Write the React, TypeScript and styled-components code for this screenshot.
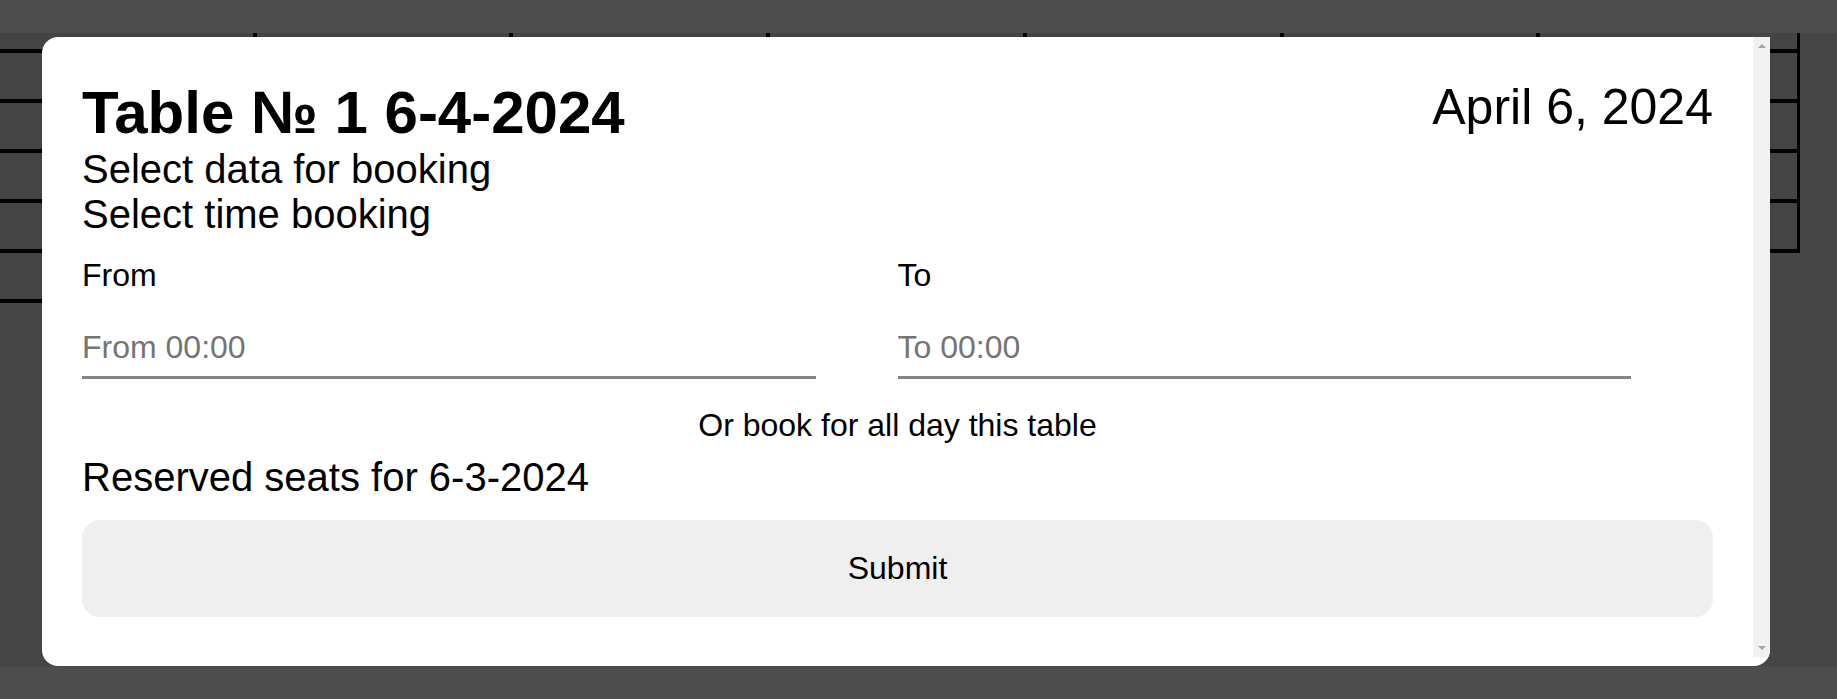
import React from "react";
import styled, { createGlobalStyle } from "styled-components";

const GlobalStyle = createGlobalStyle`
  html, body {
    margin: 0;
    padding: 0;
    background: #4d4d4d;
    font-family: "Liberation Sans", Arial, sans-serif;
    color: #000;
  }
  * { box-sizing: border-box; }
`;

const Page = styled.div`
  position: relative;
  height: 699px;
  padding: 33px 0 32px;
  background: #4d4d4d;
  overflow: hidden;
`;

const Backdrop = styled.div`
  height: 634px;
  background: #464646;
`;

const Table = styled.div`
  width: 1800px;
  display: grid;
  grid-template-columns: repeat(7, 1fr);
  grid-template-rows: 20px repeat(4, 50px);
  border-right: 3px solid #000;
`;

const Cell = styled.div<{ $last: boolean }>`
  background: #444444;
  border-bottom: 4px solid #000;
  border-right: ${(p) => (p.$last ? "none" : "4px solid #000")};
`;

const ExtraRow = styled.div`
  width: 257px;
  height: 50px;
  border-bottom: 4px solid #000;
  background: #444444;
`;

const Modal = styled.div`
  position: absolute;
  left: 42px;
  top: 37px;
  width: 1728px;
  height: 629px;
  background: #fff;
  border-radius: 16px 0 16px 16px;
  overflow: hidden;
`;

const Scroller = styled.div`
  display: flex;
  height: 620px;
`;

const Content = styled.div`
  flex: 1;
  padding: 41px 40px 40px;
  display: flex;
  flex-direction: column;
`;

const Track = styled.div`
  width: 17px;
  background: #f1f1f1;
  display: flex;
  flex-direction: column;
  justify-content: space-between;
  align-items: center;
  padding: 7px 0 7px;
`;

const Arrow = styled.div<{ $down?: boolean }>`
  width: 0;
  height: 0;
  border-left: 4px solid transparent;
  border-right: 4px solid transparent;
  ${(p) =>
    p.$down
      ? "border-top: 4px solid #a3a3a3;"
      : "border-bottom: 4px solid #a3a3a3;"}
`;

const Header = styled.div`
  display: flex;
  justify-content: space-between;
  align-items: flex-start;
`;

const Title = styled.h1`
  margin: 0;
  font-size: 60px;
  font-weight: 700;
  line-height: normal;
`;

const DateText = styled.div`
  font-size: 50px;
  line-height: normal;
`;

const Subtitle = styled.div`
  font-size: 40px;
  line-height: normal;
`;

const TimeRow = styled.div`
  display: flex;
  margin-top: 20px;
`;

const Field = styled.div`
  width: 50%;
  display: flex;
  flex-direction: column;
`;

const Label = styled.label`
  font-size: 32px;
  line-height: normal;
`;

const Input = styled.input`
  width: 90%;
  margin-top: 25px;
  padding: 10px 0;
  border: none;
  border-bottom: 3px solid #858585;
  font-family: "Liberation Sans", Arial, sans-serif;
  font-size: 32px;
  color: #000;
  background: transparent;
  outline: none;
  &::placeholder {
    color: #757575;
  }
`;

const AllDay = styled.div`
  margin-top: 28px;
  text-align: center;
  font-size: 32px;
  line-height: normal;
`;

const Reserved = styled.div`
  margin-top: 11px;
  font-size: 40px;
  line-height: normal;
`;

const SubmitButton = styled.button`
  margin-top: 20px;
  height: 97px;
  width: 100%;
  border: none;
  border-radius: 18px;
  background: #efefef;
  font-family: "Liberation Sans", Arial, sans-serif;
  font-size: 32px;
  color: #000;
`;

export default function App() {
  const cells = [];
  for (let r = 0; r < 5; r++) {
    for (let c = 0; c < 7; c++) {
      cells.push(<Cell key={`${r}-${c}`} $last={c === 6} />);
    }
  }
  return (
    <>
      <GlobalStyle />
      <Page>
        <Backdrop>
          <Table>{cells}</Table>
          <ExtraRow />
        </Backdrop>
        <Modal>
          <Scroller>
            <Content>
              <Header>
                <Title>Table № 1 6-4-2024</Title>
                <DateText>April 6, 2024</DateText>
              </Header>
              <Subtitle>Select data for booking</Subtitle>
              <Subtitle>Select time booking</Subtitle>
              <TimeRow>
                <Field>
                  <Label>From</Label>
                  <Input placeholder="From 00:00" />
                </Field>
                <Field>
                  <Label>To</Label>
                  <Input placeholder="To 00:00" />
                </Field>
              </TimeRow>
              <AllDay>Or book for all day this table</AllDay>
              <Reserved>Reserved seats for 6-3-2024</Reserved>
              <SubmitButton>Submit</SubmitButton>
            </Content>
            <Track>
              <Arrow />
              <Arrow $down />
            </Track>
          </Scroller>
        </Modal>
      </Page>
    </>
  );
}
